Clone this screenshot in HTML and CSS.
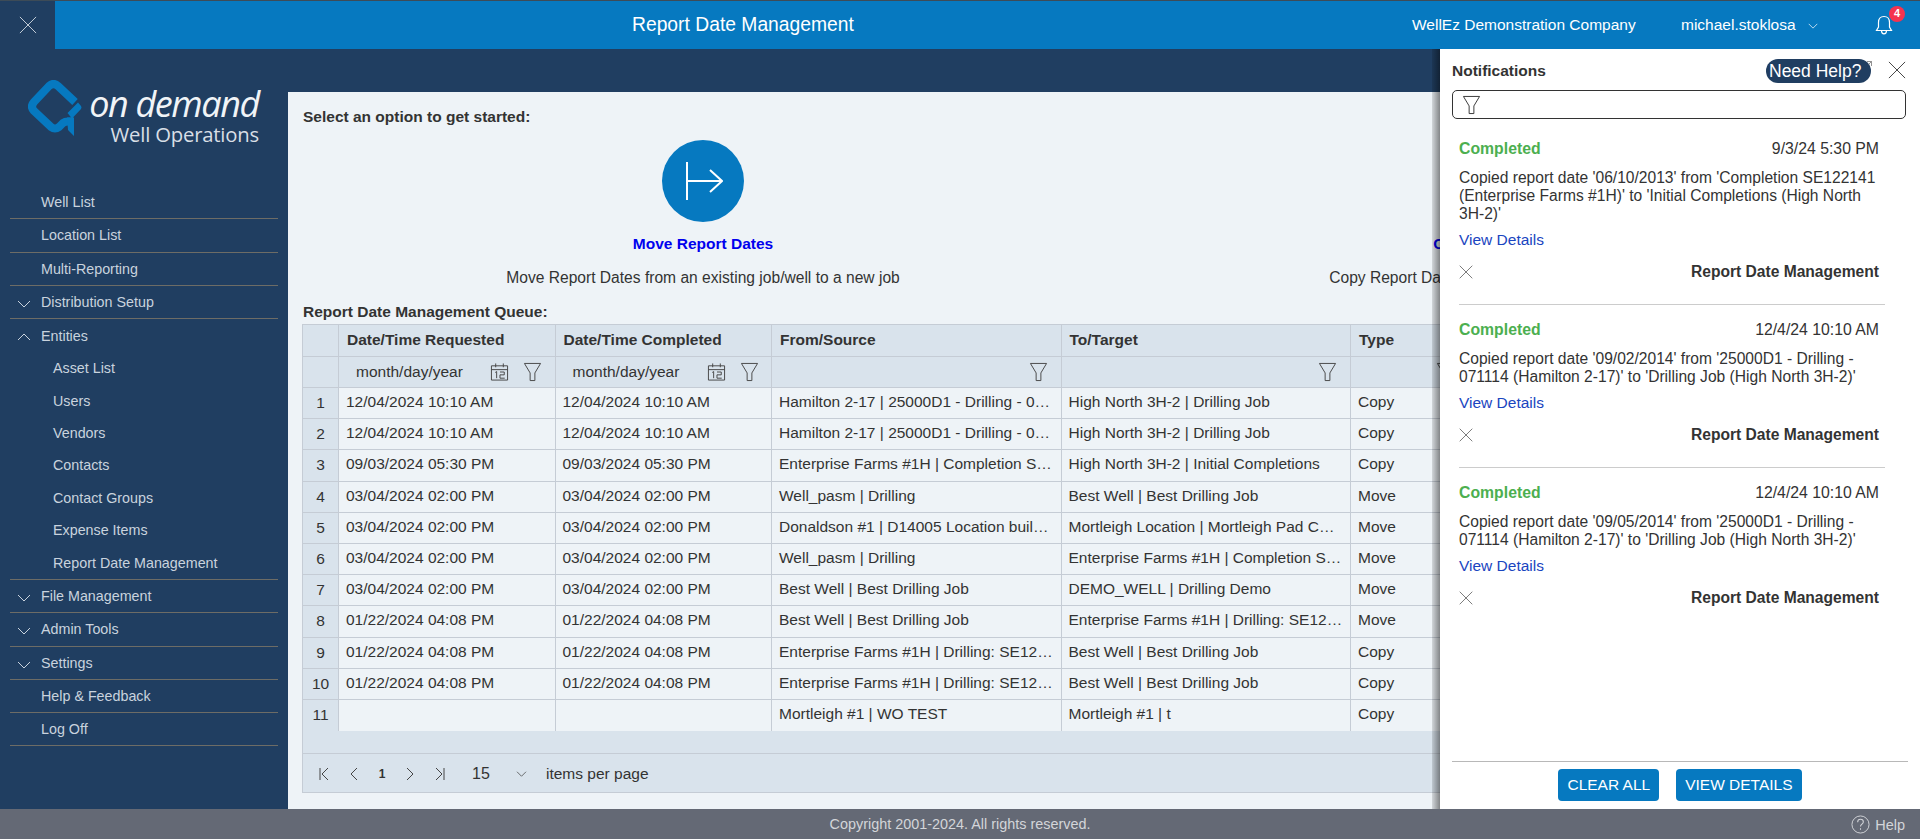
FILE: index.html
```html
<!DOCTYPE html>
<html lang="en">
<head>
<meta charset="utf-8">
<title>Report Date Management</title>
<link rel="stylesheet" href="styles.css">
</head>
<body>
<svg class="defs" width="0" height="0" aria-hidden="true">
  <symbol id="i-funnel" viewBox="0 0 20 20"><path d="M1.500 1h17L12.500 11v8h-5v-8z" fill="none" stroke="currentColor" stroke-width="1"/></symbol>
  <symbol id="i-cal" viewBox="0 0 20 20"><path d="M1.500 3.500h17v15h-17zM1.500 7.500h17M6 1v4M14 1v4M5.500 10.500l1.500-1v7M10.500 10h4.500v3h-4.500v3.500h5" fill="none" stroke="currentColor" stroke-width="1"/></symbol>
  <symbol id="i-x" viewBox="0 0 20 20"><path d="M1 1l18 18M19 1L1 19" fill="none" stroke="currentColor" stroke-width="1"/></symbol>
  <symbol id="i-down" viewBox="0 0 14 8"><path d="M1 1l6 6 6-6" fill="none" stroke="currentColor" stroke-width="1"/></symbol>
  <symbol id="i-up" viewBox="0 0 14 8"><path d="M1 7l6-6 6 6" fill="none" stroke="currentColor" stroke-width="1"/></symbol>
</svg>

<header class="topbar">
  <button class="menu-toggle" aria-label="Close menu"><svg class="ic-menu-x"><use href="#i-x"/></svg></button>
  <div class="topbar-main">
    <div class="page-title">Report Date Management</div>
    <div class="company">WellEz Demonstration Company</div>
    <div class="user">michael.stoklosa</div>
    <svg class="ic-user-chev"><use href="#i-down"/></svg>
    <div class="bell">
      <svg class="ic-bell" viewBox="0 0 18 20"><path d="M9 1.500c-3.500 0-5.500 2.500-5.500 6v4.500L1.500 15.500h15L14.500 12V7.500c0-3.500-2-6-5.500-6zM6.500 15.800c0 2 1 3 2.500 3s2.500-1 2.500-3" fill="none" stroke="currentColor" stroke-width="1.200"/></svg>
      <span class="badge">4</span>
    </div>
  </div>
</header>

<div class="layout">
  <aside class="sidebar">
    <div class="logo">
      <svg class="logo-mark" viewBox="0 0 54 57"><path d="M47 22L30 6Q25.500 2 21 6L6 22Q2 26.500 6 31L23 47Q27 50 31 47L35 43Q37 41.500 40 41.500H44" fill="none" stroke="#0679c0" stroke-width="8"/><path d="M50 22.500L53 26Q54 27.500 53 29L44 38.500L39.500 33zM39 37.500H46V56L40 50z" fill="#0679c0"/></svg>
      <div class="logo-text">
        <div class="logo-od">on demand</div>
        <div class="logo-wo">Well Operations</div>
      </div>
    </div>
    <nav class="nav">
      <a class="nav-item line">Well List</a>
      <a class="nav-item line">Location List</a>
      <a class="nav-item line">Multi-Reporting</a>
      <a class="nav-item line"><svg class="chev"><use href="#i-down"/></svg>Distribution Setup</a>
      <a class="nav-item"><svg class="chev"><use href="#i-up"/></svg>Entities</a>
      <a class="nav-sub">Asset List</a>
      <a class="nav-sub">Users</a>
      <a class="nav-sub">Vendors</a>
      <a class="nav-sub">Contacts</a>
      <a class="nav-sub">Contact Groups</a>
      <a class="nav-sub">Expense Items</a>
      <a class="nav-sub last">Report Date Management</a>
      <a class="nav-item line"><svg class="chev"><use href="#i-down"/></svg>File Management</a>
      <a class="nav-item line"><svg class="chev"><use href="#i-down"/></svg>Admin Tools</a>
      <a class="nav-item line"><svg class="chev"><use href="#i-down"/></svg>Settings</a>
      <a class="nav-item line">Help &amp; Feedback</a>
      <a class="nav-item line">Log Off</a>
    </nav>
  </aside>

  <main class="content">
    <h2 class="intro">Select an option to get started:</h2>
    <div class="options">
      <div class="option">
        <div class="circle"><svg class="ic-move" viewBox="0 0 40 40"><path d="M4 1v38M4 20h34M27 9l12 11-12 11" fill="none" stroke="#fff" stroke-width="2"/></svg></div>
        <a class="option-title">Move Report Dates</a>
        <p class="option-desc">Move Report Dates from an existing job/well to a new job</p>
      </div>
      <div class="option">
        <div class="circle"></div>
        <a class="option-title">Copy Report Dates</a>
        <p class="option-desc">Copy Report Dates from an existing job to new job</p>
      </div>
    </div>
    <h3 class="queue-title">Report Date Management Queue:</h3>
    <div class="grid-wrap">
      <table class="grid">
        <colgroup><col class="c-n"><col class="c-d"><col class="c-d"><col class="c-s"><col class="c-s"><col class="c-t"><col class="c-r"></colgroup>
        <thead>
          <tr class="head"><th></th><th>Date/Time Requested</th><th>Date/Time Completed</th><th>From/Source</th><th>To/Target</th><th>Type</th><th>Status</th></tr>
          <tr class="filter">
            <th></th>
            <th><div class="fcell"><span class="ph">month/day/year</span><svg class="ic-cal"><use href="#i-cal"/></svg><svg class="ic-fun"><use href="#i-funnel"/></svg></div></th>
            <th><div class="fcell"><span class="ph">month/day/year</span><svg class="ic-cal"><use href="#i-cal"/></svg><svg class="ic-fun"><use href="#i-funnel"/></svg></div></th>
            <th><div class="fcell end"><svg class="ic-fun"><use href="#i-funnel"/></svg></div></th>
            <th><div class="fcell end"><svg class="ic-fun"><use href="#i-funnel"/></svg></div></th>
            <th><div class="fcell end"><svg class="ic-fun"><use href="#i-funnel"/></svg></div></th>
            <th></th>
          </tr>
        </thead>
        <tbody>
          <tr><td class="n">1</td><td>12/04/2024 10:10 AM</td><td>12/04/2024 10:10 AM</td><td>Hamilton 2-17 | 25000D1 - Drilling - 071114</td><td>High North 3H-2 | Drilling Job</td><td>Copy</td><td></td></tr>
          <tr><td class="n">2</td><td>12/04/2024 10:10 AM</td><td>12/04/2024 10:10 AM</td><td>Hamilton 2-17 | 25000D1 - Drilling - 071114</td><td>High North 3H-2 | Drilling Job</td><td>Copy</td><td></td></tr>
          <tr><td class="n">3</td><td>09/03/2024 05:30 PM</td><td>09/03/2024 05:30 PM</td><td>Enterprise Farms #1H | Completion SE122141</td><td>High North 3H-2 | Initial Completions</td><td>Copy</td><td></td></tr>
          <tr><td class="n">4</td><td>03/04/2024 02:00 PM</td><td>03/04/2024 02:00 PM</td><td>Well_pasm | Drilling</td><td>Best Well | Best Drilling Job</td><td>Move</td><td></td></tr>
          <tr><td class="n">5</td><td>03/04/2024 02:00 PM</td><td>03/04/2024 02:00 PM</td><td>Donaldson #1 | D14005 Location building</td><td>Mortleigh Location | Mortleigh Pad Construction</td><td>Move</td><td></td></tr>
          <tr><td class="n">6</td><td>03/04/2024 02:00 PM</td><td>03/04/2024 02:00 PM</td><td>Well_pasm | Drilling</td><td>Enterprise Farms #1H | Completion SE122141</td><td>Move</td><td></td></tr>
          <tr><td class="n">7</td><td>03/04/2024 02:00 PM</td><td>03/04/2024 02:00 PM</td><td>Best Well | Best Drilling Job</td><td>DEMO_WELL | Drilling Demo</td><td>Move</td><td></td></tr>
          <tr><td class="n">8</td><td>01/22/2024 04:08 PM</td><td>01/22/2024 04:08 PM</td><td>Best Well | Best Drilling Job</td><td>Enterprise Farms #1H | Drilling: SE122141</td><td>Move</td><td></td></tr>
          <tr><td class="n">9</td><td>01/22/2024 04:08 PM</td><td>01/22/2024 04:08 PM</td><td>Enterprise Farms #1H | Drilling: SE122141</td><td>Best Well | Best Drilling Job</td><td>Copy</td><td></td></tr>
          <tr><td class="n">10</td><td>01/22/2024 04:08 PM</td><td>01/22/2024 04:08 PM</td><td>Enterprise Farms #1H | Drilling: SE122141</td><td>Best Well | Best Drilling Job</td><td>Copy</td><td></td></tr>
          <tr><td class="n">11</td><td></td><td></td><td>Mortleigh #1 | WO TEST</td><td>Mortleigh #1 | t</td><td>Copy</td><td></td></tr>
        </tbody>
      </table>
      <div class="grid-band"></div>
      <div class="pager">
        <svg class="pg" viewBox="0 0 10 14"><path d="M1 1v12M9 1L3 7l6 6" fill="none" stroke="currentColor"/></svg>
        <svg class="pg" viewBox="0 0 10 14"><path d="M8 1L2 7l6 6" fill="none" stroke="currentColor"/></svg>
        <span class="pg-num">1</span>
        <svg class="pg" viewBox="0 0 10 14"><path d="M2 1l6 6-6 6" fill="none" stroke="currentColor"/></svg>
        <svg class="pg" viewBox="0 0 10 14"><path d="M1 1l6 6-6 6M9 1v12" fill="none" stroke="currentColor"/></svg>
        <span class="pg-size">15</span>
        <svg class="pg-chev"><use href="#i-down"/></svg>
        <span class="pg-label">items per page</span>
      </div>
    </div>
  </main>

  <section class="notifications">
    <div class="nt-head">
      <h4 class="nt-title">Notifications</h4>
      <a class="help-pill">Need Help?<svg class="ic-ext" viewBox="0 0 6 6"><path d="M1 .5h4.500V5M5.500 .5L2.500 3.500" fill="none" stroke="currentColor" stroke-width=".8"/></svg></a>
      <svg class="ic-nt-x"><use href="#i-x"/></svg>
    </div>
    <div class="nt-filter"><svg class="ic-nt-fun"><use href="#i-funnel"/></svg></div>
    <div class="nt-list">
      <article class="nt">
        <div class="nt-row"><span class="nt-status">Completed</span><span class="nt-date">9/3/24 5:30 PM</span></div>
        <p class="nt-msg">Copied report date '06/10/2013' from 'Completion SE122141<br>(Enterprise Farms #1H)' to 'Initial Completions (High North<br>3H-2)'</p>
        <a class="nt-link">View Details</a>
        <div class="nt-foot"><svg class="ic-nt-dismiss"><use href="#i-x"/></svg><span class="nt-src">Report Date Management</span></div>
      </article>
      <article class="nt">
        <div class="nt-row"><span class="nt-status">Completed</span><span class="nt-date">12/4/24 10:10 AM</span></div>
        <p class="nt-msg">Copied report date '09/02/2014' from '25000D1 - Drilling -<br>071114 (Hamilton 2-17)' to 'Drilling Job (High North 3H-2)'</p>
        <a class="nt-link">View Details</a>
        <div class="nt-foot"><svg class="ic-nt-dismiss"><use href="#i-x"/></svg><span class="nt-src">Report Date Management</span></div>
      </article>
      <article class="nt">
        <div class="nt-row"><span class="nt-status">Completed</span><span class="nt-date">12/4/24 10:10 AM</span></div>
        <p class="nt-msg">Copied report date '09/05/2014' from '25000D1 - Drilling -<br>071114 (Hamilton 2-17)' to 'Drilling Job (High North 3H-2)'</p>
        <a class="nt-link">View Details</a>
        <div class="nt-foot"><svg class="ic-nt-dismiss"><use href="#i-x"/></svg><span class="nt-src">Report Date Management</span></div>
      </article>
    </div>
    <div class="nt-actions">
      <button class="nt-btn">CLEAR ALL</button>
      <button class="nt-btn">VIEW DETAILS</button>
    </div>
  </section>
</div>

<footer class="footer">
  <span class="copyright">Copyright 2001-2024. All rights reserved.</span>
  <span class="foot-help"><svg class="ic-help" viewBox="0 0 20 20"><circle cx="10" cy="10" r="9" fill="none" stroke="currentColor"/><path d="M7 7.500c0-2 1.500-3 3-3s3 1 3 2.800c0 2.200-3 2.400-3 4.700M10 14v1.500" fill="none" stroke="currentColor" stroke-width="1.100"/></svg>Help</span>
</footer>
</body>
</html>
```
FILE: styles.css
```css
* { box-sizing: border-box; }
html, body { height: 100%; }
body {
  margin: 0;
  height: 839px;
  overflow: hidden;
  display: flex;
  flex-direction: column;
  background: #203e61;
  color: #333;
  font: 15.500px/18px "Liberation Sans", Arial, sans-serif;
}
.defs { display: none; }
svg { display: block; flex: none; }
h2, h3, h4, p { margin: 0; }

/* top bar */
.topbar {
  flex: none;
  height: 49px;
  display: flex;
  border-top: 1px solid #3d4b57;
}
.menu-toggle {
  width: 55px;
  border: 0;
  padding: 0;
  background: #203e61;
  color: #d5dbe3;
  display: flex;
  align-items: center;
  justify-content: center;
}
.ic-menu-x { width: 18px; height: 18px; }
.topbar-main {
  flex: 1;
  display: flex;
  align-items: center;
  background: #0679c0;
  color: #fff;
}
.page-title { font-size: 19.300px; margin-left: 577px; width: 780px; }
.company { width: 269px; }
.user { width: 127px; }
.ic-user-chev { width: 10px; height: 6px; margin-top: 2px; }
.bell { position: relative; margin-left: 57px; }
.ic-bell { width: 18px; height: 20px; }
.badge {
  position: absolute;
  left: 14px;
  top: -9px;
  width: 16px;
  height: 16px;
  border-radius: 50%;
  background: #f5334f;
  color: #fff;
  font-size: 11px;
  font-weight: 700;
  line-height: 15px;
  text-align: center;
}

/* page frame */
.layout {
  flex: 1;
  min-height: 0;
  display: flex;
  position: relative;
}

/* sidebar */
.sidebar { flex: none; width: 288px; }
.logo {
  display: flex;
  margin: 31px 0 0 28px;
  height: 106px;
}
.logo-mark { width: 54px; height: 57px; }
.logo-text { margin: 5px 0 0 7px; width: 170px; text-align: right; }
.logo-od {
  color: #f1f4f7;
  font: italic 36px/37px "Open Sans", sans-serif;
  letter-spacing: -1.400px;
  white-space: nowrap;
}
.logo-wo {
  color: #d9dfe6;
  font: 20.300px/24px "Open Sans", sans-serif;
  letter-spacing: -.2px;
  white-space: nowrap;
}
.nav { margin: 0 10px; width: 268px; color: #c9d3de; font-size: 14.300px; }
.nav-item, .nav-sub {
  display: flex;
  align-items: center;
  padding-left: 31px;
  position: relative;
}
.nav-item { height: 33.250px; }
.nav-sub { height: 32.300px; padding-left: 43px; }
.nav-sub.last { border-bottom: 1px solid #6d6c66; height: 34px; }
.line { border-bottom: 1px solid #6d6c66; }
.chev { position: absolute; left: 7px; top: 14px; width: 14px; height: 8px; }

/* main content */
.content {
  flex: 1;
  min-width: 0;
  margin-top: 43px;
  padding: 16px 15px 16px;
  background: #eef3f7;
  overflow: hidden;
}
.intro, .queue-title { font-size: 15.500px; font-weight: 700; line-height: 18px; }
.options { display: flex; margin-top: 14px; }
.option { flex: 0 0 800px; display: flex; flex-direction: column; align-items: center; }
.circle {
  flex: none;
  width: 82px;
  height: 82px;
  border-radius: 50%;
  background: #0679c0;
  display: flex;
  align-items: center;
  justify-content: center;
}
.ic-move { width: 40px; height: 40px; }
.option-title { margin-top: 13px; color: #0000ee; font-weight: 700; }
.option-desc { margin-top: 16px; font-size: 15.600px; }
.queue-title { margin-top: 16px; }

/* grid */
.grid-wrap {
  margin-top: 3px;
  width: 1602px;
  margin-left: -1px;
  border: 1px solid #c5ccd5;
  border-width: 1px 0 1px 1px;
}
.grid {
  table-layout: fixed;
  width: 100%;
  border-collapse: separate;
  border-spacing: 0;
}
.c-n { width: 36px; }
.c-d { width: 216.500px; }
.c-s { width: 289.500px; }
.c-t { width: 118px; }
.grid th, .grid td {
  text-align: left;
  white-space: nowrap;
  overflow: hidden;
  text-overflow: ellipsis;
  border-right: 1px solid #c5ccd5;
  border-bottom: 1px solid #c5ccd5;
}
.grid td { height: 31.200px; padding: 0 7px 2px 7px; font-weight: 400; }
.grid th { background: #d9e3ec; height: 32px; padding: 0 6px 2px 8px; }
.filter th { height: 31px; font-weight: 400; padding-bottom: 0; }
.grid td.n { background: #d9e3ec; text-align: center; padding: 0; }
.grid tbody tr:last-child td { border-bottom: 0; }
.fcell { display: flex; align-items: center; }
.fcell.end { justify-content: flex-end; padding-right: 7px; }
.ph { margin-left: 9px; width: 134px; }
.ic-cal { width: 19px; height: 20px; color: #444; }
.ic-fun { width: 19px; height: 20px; margin-left: 14px; color: #444; }
.grid-band { height: 23px; background: #d9e3ec; border-bottom: 1px solid #c5ccd5; }
.pager {
  height: 38px;
  display: flex;
  align-items: center;
  background: #d9e3ec;
  padding: 2px 0 0 16px;
}
.pg { width: 10px; height: 14px; margin-right: 20px; color: #444; }
.pg-num { font-size: 12px; font-weight: 700; width: 10px; margin: 0 18px 0 -2px; text-align: center; }
.pg-size { margin-left: 7px; width: 44px; font-size: 16px; }
.pg-chev { width: 11px; height: 6px; margin-right: 19px; color: #444; }

/* notifications */
.notifications {
  position: absolute;
  right: 0;
  top: 0;
  bottom: 0;
  width: 480px;
  padding: 0 12px;
  background: #fff;
  display: flex;
  flex-direction: column;
}
.notifications::before {
  content: "";
  position: absolute;
  left: -8px;
  top: 0;
  bottom: 0;
  width: 8px;
  background: linear-gradient(to right, rgba(0, 0, 0, .12), rgba(0, 0, 0, .45));
}
.nt-head {
  flex: none;
  height: 41px;
  display: flex;
  align-items: center;
  padding-top: 3px;
}
.nt-title { flex: 1; font-size: 15.500px; font-weight: 700; }
.help-pill {
  position: relative;
  width: 105px;
  height: 24px;
  border-radius: 12px;
  background: #203e61;
  color: #fff;
  font-size: 17.500px;
  line-height: 24px;
  padding-left: 3px;
  white-space: nowrap;
}
.ic-ext { position: absolute; right: -1px; top: 2px; width: 6px; height: 6px; color: #777; }
.ic-nt-x { width: 18px; height: 18px; margin: 0 2px 3px 17px; color: #333; }
.nt-filter {
  flex: none;
  width: 454px;
  height: 29px;
  border: 1px solid #333;
  border-radius: 5px;
  padding: 4px 9px;
}
.ic-nt-fun { width: 19px; height: 20px; color: #333; }
.nt-list { flex: 1; padding: 5px 23px 0 7px; }
.nt { padding: 15px 0 23px; border-bottom: 1px solid #ccc; }
.nt:last-child { border-bottom: 0; }
.nt-row { display: flex; justify-content: space-between; padding-right: 6px; height: 20px; align-items: center; }
.nt-status { color: #4caf50; font-weight: 700; font-size: 15.800px; }
.nt-date { font-size: 15.800px; }
.nt-msg { margin-top: 10px; font-size: 15.600px; white-space: nowrap; }
.nt-link { display: block; margin-top: 8px; color: #1a45c0; }
.nt-foot { display: flex; justify-content: space-between; align-items: center; margin-top: 14px; padding-right: 6px; }
.nt-src { font-weight: 700; font-size: 15.600px; }
.ic-nt-dismiss { width: 14px; height: 14px; color: #444; }
.nt-actions {
  flex: none;
  height: 48px;
  border-top: 1px solid #b8b8b8;
  display: flex;
  justify-content: center;
  gap: 17px;
  padding-top: 7px;
}
.nt-btn {
  height: 32px;
  padding: 0 9px;
  border: 0;
  border-radius: 4px;
  background: #0679c0;
  color: #fff;
  font: 15.500px "Liberation Sans", Arial, sans-serif;
}

/* footer */
.footer {
  flex: none;
  height: 30px;
  background: #646975;
  color: #d3d5d9;
  font-size: 14.400px;
  display: flex;
  align-items: center;
  justify-content: center;
  position: relative;
}
.foot-help {
  position: absolute;
  right: 15px;
  top: 6px;
  display: flex;
  align-items: center;
  gap: 5px;
  font-size: 14.500px;
}
.ic-help { width: 19px; height: 19px; }
```
